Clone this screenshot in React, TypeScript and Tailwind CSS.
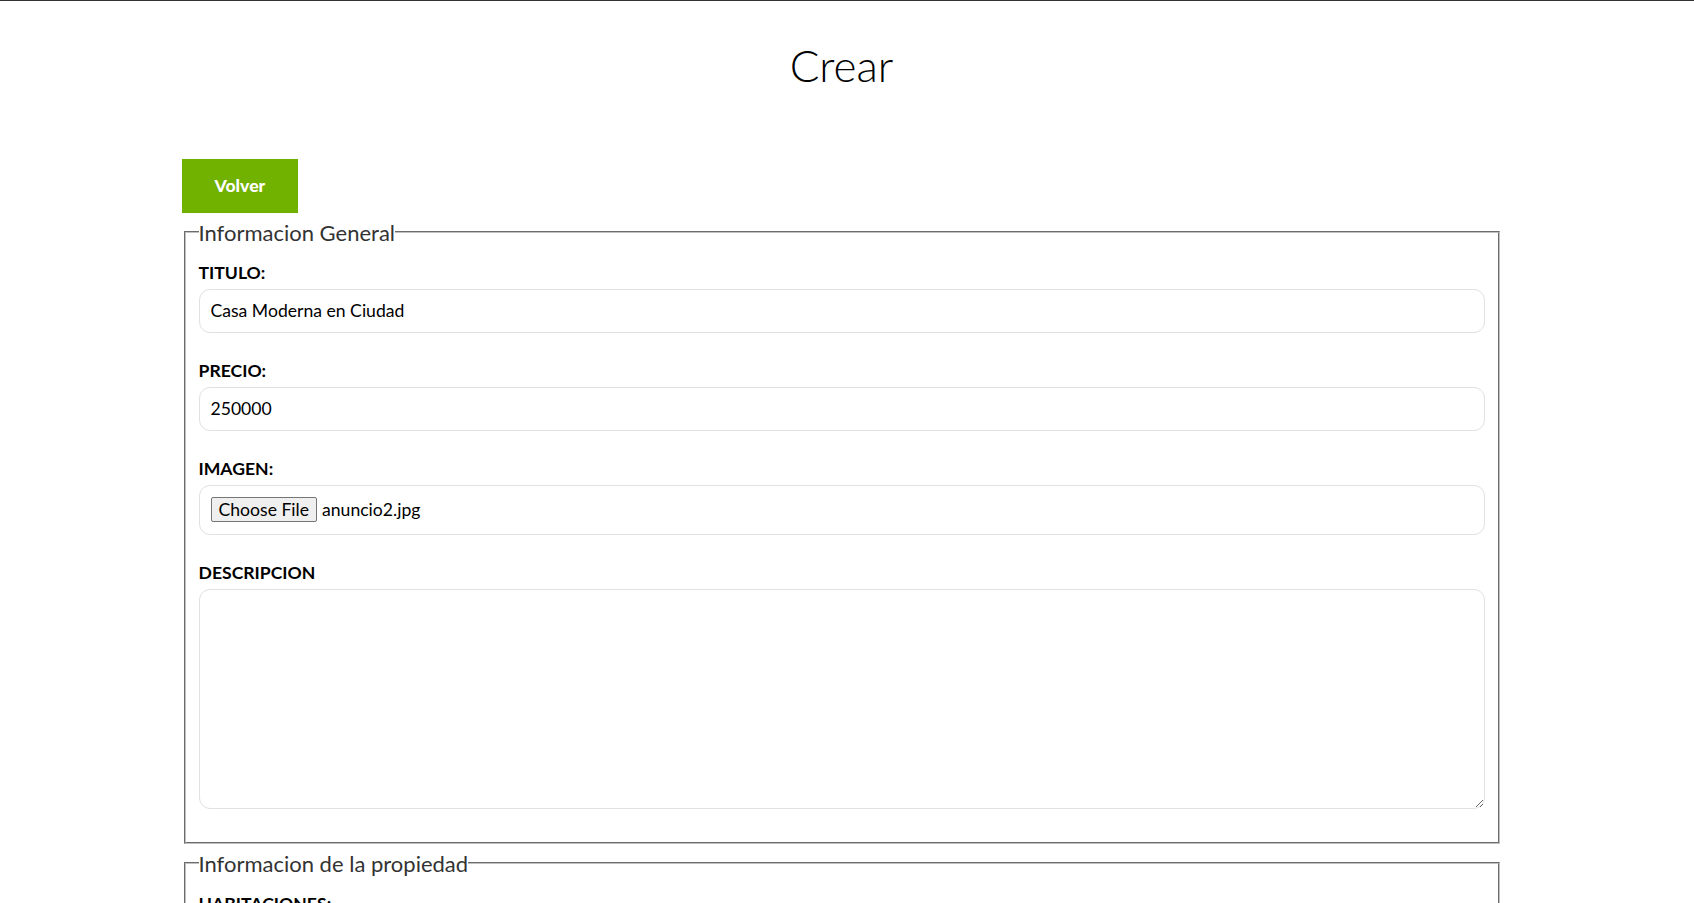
import { useState } from 'react';

const inputClass =
  'block w-full h-[44px] px-[11px] border border-[#e1e1e1] rounded-[11px] bg-white text-black outline-none';

function Label({ htmlFor, children }: { htmlFor: string; children: React.ReactNode }) {
  return (
    <label htmlFor={htmlFor} className="block font-bold leading-[32px]">
      {children}
    </label>
  );
}

export default function App() {
  const [titulo, setTitulo] = useState('Casa Moderna en Ciudad');
  const [precio, setPrecio] = useState('250000');

  return (
    <div className="h-screen overflow-hidden bg-white font-['Lato',sans-serif] text-[17.6px] leading-[1.8] text-black">
      <div className="h-px bg-[#333]" />
      <div className="pr-[11px]">
        <main className="mx-auto w-[1320px]">
          <h1 className="mt-[25px] mb-[54px] text-center text-[44px] font-light leading-[1.8]">Crear</h1>

          <div className="flex">
            <a href="#" className="block bg-[#71b100] px-[33px] py-[11px] font-black leading-[31.7px] text-white">
              Volver
            </a>
          </div>

          <form onSubmit={e => e.preventDefault()}>
            <fieldset className="mx-[2px] border-2 border-[#c0c0c0] [border-style:groove] px-[13px] pt-[5px] pb-[11px]">
              <legend className="text-[22px] leading-[39px] text-[#333]">Informacion General</legend>

              <Label htmlFor="titulo">TITULO:</Label>
              <input
                id="titulo"
                type="text"
                value={titulo}
                onChange={e => setTitulo(e.target.value)}
                className={`${inputClass} mb-[22px]`}
              />

              <Label htmlFor="precio">PRECIO:</Label>
              <input
                id="precio"
                type="text"
                value={precio}
                onChange={e => setPrecio(e.target.value)}
                className={`${inputClass} mb-[22px]`}
              />

              <Label htmlFor="imagen">IMAGEN:</Label>
              <div className="mb-[22px] flex h-[50px] w-full items-center rounded-[11px] border border-[#e1e1e1] px-[11px]">
                <span className="mr-[5px] rounded-[2px] border border-[#767676] bg-[#efefef] px-[7px] leading-[23px]">
                  Choose File
                </span>
                <span className="leading-normal">anuncio2.jpg</span>
              </div>

              <Label htmlFor="descripcion">DESCRIPCION</Label>
              <textarea
                id="descripcion"
                className="mb-[22px] block h-[220px] w-full rounded-[11px] border border-[#e1e1e1] p-[11px] outline-none"
              />
            </fieldset>

            <fieldset className="mx-[2px] border-2 border-[#c0c0c0] [border-style:groove] px-[13px] pt-[5px] pb-[11px]">
              <legend className="text-[22px] leading-[39px] text-[#333]">Informacion de la propiedad</legend>

              <Label htmlFor="habitaciones">HABITACIONES:</Label>
              <input id="habitaciones" type="number" placeholder="Ej: 3" className={`${inputClass} mb-[22px]`} />

              <Label htmlFor="wc">BAÑOS:</Label>
              <input id="wc" type="number" placeholder="Ej: 3" className={`${inputClass} mb-[22px]`} />

              <Label htmlFor="estacionamiento">ESTACIONAMIENTO:</Label>
              <input id="estacionamiento" type="number" placeholder="Ej: 3" className={`${inputClass} mb-[22px]`} />
            </fieldset>
          </form>
        </main>
      </div>
    </div>
  );
}
